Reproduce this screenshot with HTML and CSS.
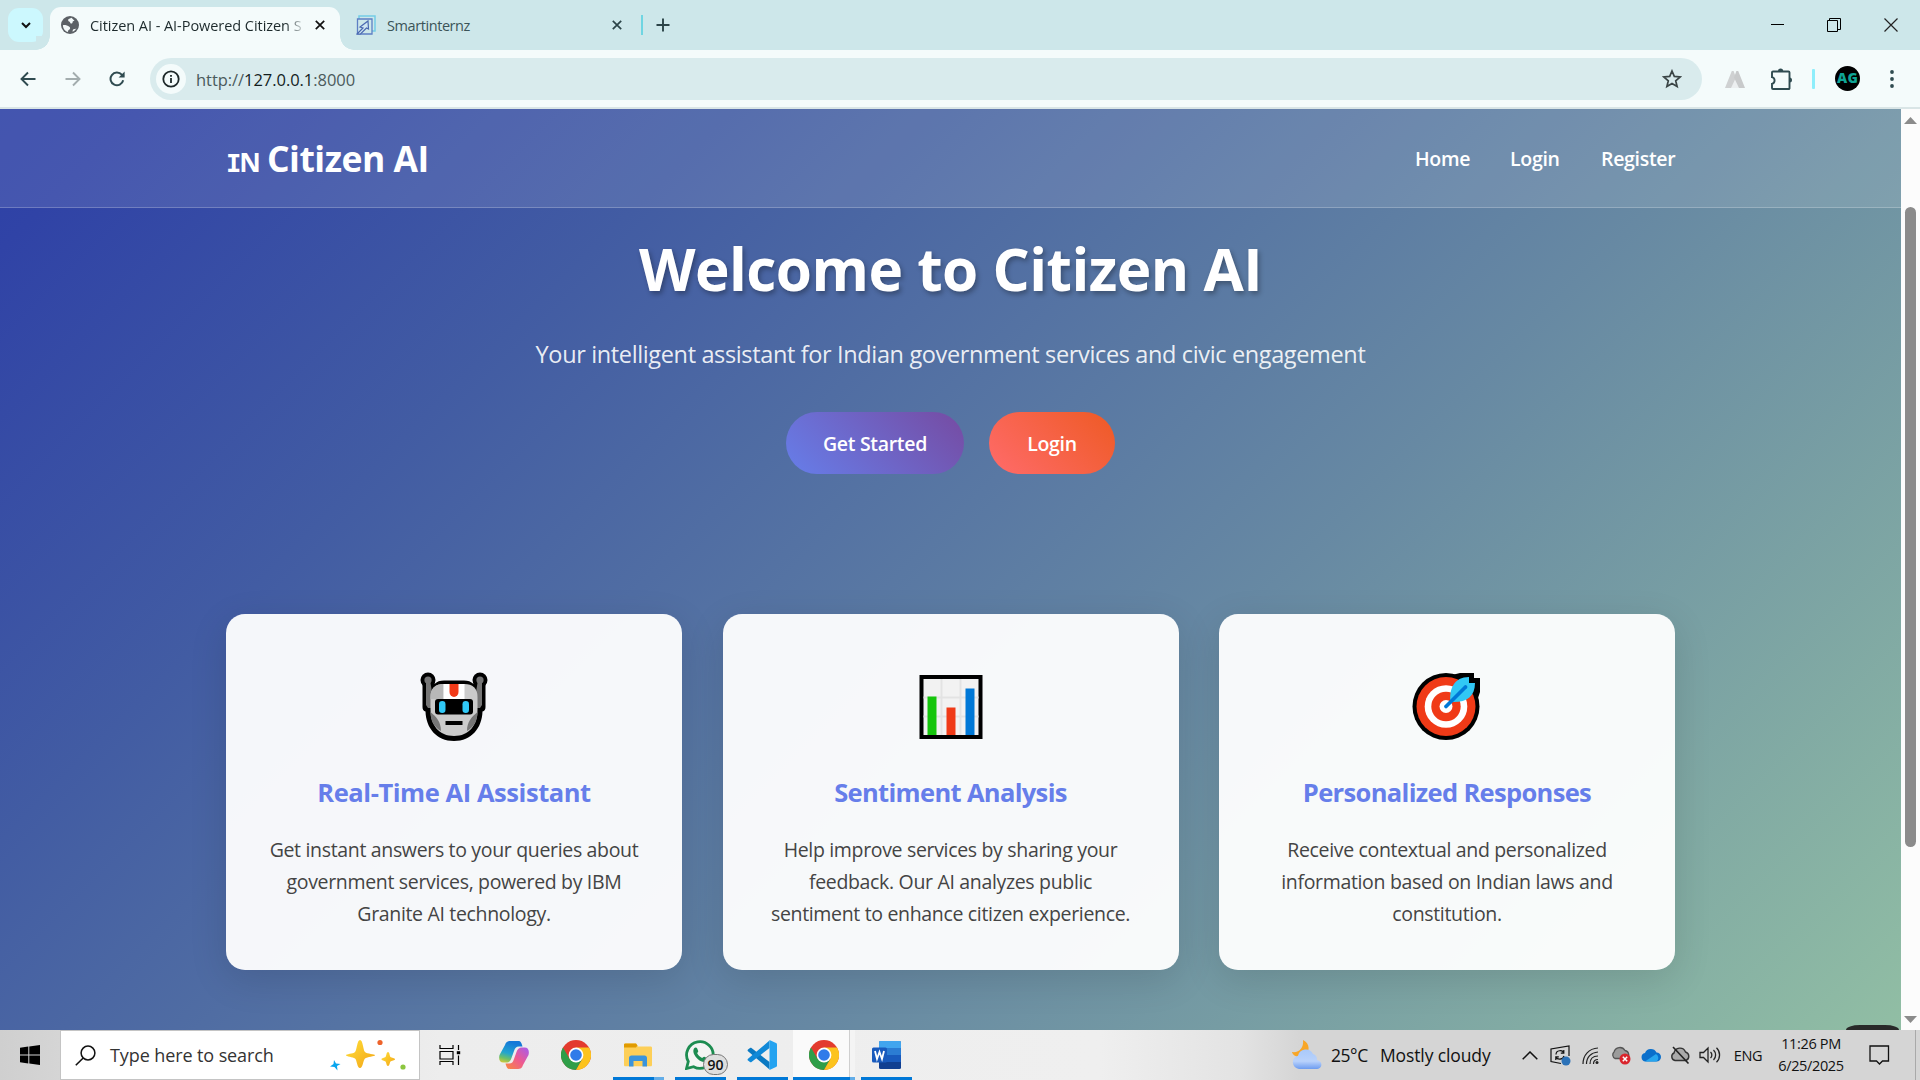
FILE: index.html
```html
<!DOCTYPE html>
<html lang="en">
<head>
<meta charset="utf-8">
<title>Citizen AI - AI-Powered Citizen Services</title>
<link rel="stylesheet" href="styles.css">
</head>
<body>
<svg class="defs" width="0" height="0" aria-hidden="true">
  <defs>
    <linearGradient id="gold" x1="0" y1="0" x2="1" y2="1"><stop offset="0" stop-color="#ffe03a"/><stop offset="1" stop-color="#f3a416"/></linearGradient>
    <linearGradient id="cop-a" x1=".3" y1="0" x2="0" y2="1"><stop offset="0" stop-color="#1478d8"/><stop offset=".5" stop-color="#22a5d0"/><stop offset=".75" stop-color="#6cc06a"/><stop offset="1" stop-color="#e8cb2c"/></linearGradient>
    <linearGradient id="cop-b" x1="1" y1="0" x2="0" y2="1"><stop offset="0" stop-color="#a45cf0"/><stop offset=".5" stop-color="#ee5a90"/><stop offset="1" stop-color="#f98a3c"/></linearGradient>
    <linearGradient id="cloud" x1="0" y1="0" x2="0" y2="1"><stop offset="0" stop-color="#a9c9fa"/><stop offset=".6" stop-color="#b9d2fb"/><stop offset="1" stop-color="#6d9cf0"/></linearGradient>
    <symbol id="chrome" viewBox="0 0 30 30">
      <circle cx="15" cy="15" r="15" fill="#e33b2e"/>
      <path d="M2 7.5A15 15 0 0 0 15 30L21.5 18.7L8.5 18.7Z" fill="#2f9e48"/>
      <path d="M15 30A15 15 0 0 0 28 7.5H15L21.5 18.7Z" fill="#fcc31e"/>
      <circle cx="15" cy="15" r="7.4" fill="#fff"/><circle cx="15" cy="15" r="5.8" fill="#2f7be9"/>
    </symbol>
    <symbol id="cross" viewBox="0 0 10 10"><path d="M.8.8 9.2 9.2M9.2.8.8 9.2" stroke="currentColor" stroke-width="1.7"/></symbol>
  </defs>
</svg>

<div class="tabstrip">
  <button class="tab-search"><svg width="10" height="7" viewBox="0 0 10 7"><path d="M1 1l4 4 4-4" fill="none" stroke="#111" stroke-width="2"/></svg></button>
  <div class="tab tab-active">
    <svg class="favicon" width="18" height="18" viewBox="0 0 18 18"><circle cx="9" cy="9" r="9" fill="#5c6166"/><path d="M10.5 1.8c-1 .6-3.6.9-3.300 2.700.2 1.200 1.800 1 2 2.200.2 1.300 2.300 1.200 2.300-.2 0-1 .8-1.700 2-1.700M1.900 9.200c1.800-.3 4.600 0 6.400 1.600 1.700 1.500.4 2.700-.6 3.300-.8.500-.7 1.400-.6 2C4.200 15.400 2 12.600 1.900 9.200zM11.600 15.800c.1-1.700.3-2.600 1.700-2.700 1.200-.1 2-.6 2.500-1.600-.7 1.900-2.200 3.600-4.200 4.300z" fill="#f4fafa"/></svg>
    <span class="tab-title fade">Citizen AI - AI-Powered Citizen S</span>
    <svg class="tab-close" width="10" height="10"><use href="#cross"/></svg>
  </div>
  <div class="tab tab-idle">
    <svg class="favicon" width="20" height="20" viewBox="0 0 20 20" fill="none"><path d="M3 4V1h16v15h-3" stroke="#74cde6" stroke-width="1.500"/><path d="M1.500 4h14.500v15H1.500z" stroke="#5d7fc4" stroke-width="1.300"/><path d="M1 19l6-6-3-1 8-6 .5 8-2-1-6 6z" stroke="#4a68b0" stroke-width="1.200" fill="#cfe6f2"/></svg>
    <span class="tab-title">Smartinternz</span>
    <svg class="tab-close" width="10" height="10"><use href="#cross"/></svg>
  </div>
  <i class="tab-rule"></i>
  <svg class="newtab" width="14" height="14" viewBox="0 0 14 14"><path d="M7 .5v13M.5 7h13" stroke="#2b4448" stroke-width="1.900"/></svg>
  <div class="winbtns">
    <svg width="14" height="14" viewBox="0 0 14 14"><path d="M0 6.500h13" stroke="#000"/></svg>
    <svg width="14" height="14" viewBox="0 0 14 14" fill="none" stroke="#000"><path d="M.5 2.500h10v11H.5zM2.500 2.500v-2h11v11h-3"/></svg>
    <svg width="14" height="14" viewBox="0 0 14 14"><path d="M.5.5l13 13M13.500.5l-13 13" stroke="#222" stroke-width="1.200"/></svg>
  </div>
</div>

<div class="toolbar">
  <svg class="tool back" width="16" height="16" viewBox="0 0 16 16"><path d="M15.500 8H1.500M8 1.500 1.500 8 8 14.500" fill="none" stroke="#2f4b50" stroke-width="1.900"/></svg>
  <svg class="tool fwd" width="16" height="16" viewBox="0 0 16 16"><path d="M.5 8h14M8 1.500 14.500 8 8 14.500" fill="none" stroke="#a3adae" stroke-width="1.900"/></svg>
  <svg class="tool reload" width="16" height="16" viewBox="0 0 16 16"><path d="M14.200 9.300A6.400 6.400 0 1 1 12.800 3.700L14.500 5.400" fill="none" stroke="#2f4b50" stroke-width="2"/><path d="M15.600.6v6h-6z" fill="#2f4b50"/></svg>
  <div class="omnibox">
    <span class="info"><svg width="18" height="18" viewBox="0 0 18 18"><circle cx="9" cy="9" r="7.700" fill="none" stroke="#1d2829" stroke-width="1.800"/><path d="M9 8v5M9 5v1.800" stroke="#1d2829" stroke-width="1.800"/></svg></span>
    <span class="url">http://<b>127.0.0.1</b>:8000</span>
    <svg class="star" width="20" height="20" viewBox="0 0 20 20"><path d="M10 2l2.300 5.400 5.900.5-4.500 3.900 1.400 5.700L10 14.400l-5.100 3.100 1.400-5.700L1.800 7.900l5.900-.5z" fill="none" stroke="#3b4546" stroke-width="1.700"/></svg>
  </div>
  <svg class="ext" width="20" height="18" viewBox="0 0 20 18"><path d="M10 6 5 18h10z" fill="#eceff0"/><path d="M0 18 6.800 1h1.800L11 7.500 6 18z" fill="#cfd1d2"/><path d="M20 18 13.200 1h-1.800L9 7.500 14 18z" fill="#c8cacb"/></svg>
  <svg class="puzzle" width="21" height="22" viewBox="0 0 21 22"><path d="M2 3.500h15.500a1 1 0 0 1 1 1V20a.8.800 0 0 1-1 1H2a1 1 0 0 1-1-1v-4.200a3.400 3.400 0 0 0 0-6.600V4.500a1 1 0 0 1 1-1z" fill="none" stroke="#2f4b50" stroke-width="1.900"/><path d="M7 3a2.600 2.600 0 0 1 5.200 0zM18.500 9.500a2.500 2.500 0 0 1 0 5z" fill="#2f4b50"/></svg>
  <i class="tool-rule"></i>
  <span class="avatar">AG</span>
  <svg class="dots" width="4" height="18" viewBox="0 0 4 18" fill="#2f4b50"><circle cx="2" cy="2" r="1.900"/><circle cx="2" cy="9" r="1.900"/><circle cx="2" cy="16" r="1.900"/></svg>
</div>

<div class="viewport">
  <div class="page">
    <header class="site-header">
      <div class="wrap header-row">
        <div class="logo"><span class="flag"><span class="flag-i">I</span>N</span><span>Citizen AI</span></div>
        <nav class="nav"><a class="nav-home">Home</a><a class="nav-login">Login</a><a class="nav-reg">Register</a></nav>
      </div>
    </header>
    <section class="hero">
      <h1>Welcome to Citizen AI</h1>
      <p>Your intelligent assistant for Indian government services and civic engagement</p>
      <div class="cta"><a class="btn btn-start">Get Started</a><a class="btn btn-login">Login</a></div>
    </section>
    <section class="wrap cards">
      <article class="card">
        <svg class="emoji" width="70" height="70" viewBox="0 0 70 70">
          <circle cx="9" cy="8" r="7.500"/><circle cx="61" cy="8" r="7.500"/>
          <path d="M3.500 8h11l1 4C18 9.500 21 8.500 25 8.500h20c4 0 7 1 9.500 3.500l1-4h11v27c0 2.500-1 4-3 4.500C63 56 52.500 69 35 69S7 56 6.500 39.500c-2-.5-3-2-3-4.500z"/>
          <circle cx="9" cy="8" r="3.600" fill="#767676"/><circle cx="61" cy="8" r="3.600" fill="#767676"/>
          <path d="M7 8h4l2 12v16h-4l-2-3zM63 8h-4l-2 12v16h4l2-3z" fill="#767676"/>
          <path d="M11.500 25c0-9 5-13 13-13h21c8 0 13 4 13 13v13c0 15-8.500 26-23.500 26S11.500 53 11.500 38z" fill="#cbcbcb"/>
          <path d="M11.500 25c0-9 5-13 13-13v15h-13z" fill="#b8b8b8"/>
          <path d="M11.500 40c6 5 10.500 10 10.500 19-7-4-10.500-10-10.500-19zM58.500 40c-6 5-10.500 10-10.500 19 7-4 10.500-10 10.500-19z" fill="#767676"/>
          <path d="M24.500 12h21v15h-21z" fill="#fff"/><path d="M30.500 12h9v8a4.500 5 0 0 1-9 0z" fill="#f23a18"/>
          <rect x="16" y="27" width="38" height="15.500" rx="3"/><rect x="20" y="29" width="6.500" height="12" rx="3.200" fill="#30c9f7"/><rect x="43.500" y="29" width="6.500" height="12" rx="3.200" fill="#30c9f7"/>
          <path d="M26.500 49h17v4h-17z"/>
        </svg>
        <h3 class="t1">Real-Time AI Assistant</h3>
        <p>Get instant answers to your queries about<br>government services, powered by IBM<br>Granite AI technology.</p>
      </article>
      <article class="card">
        <svg class="emoji" width="70" height="70" viewBox="0 0 70 70">
          <path d="M3.500 3h63v64h-63z"/><path d="M7.500 7h55v56h-55z" fill="#f2f2f2"/>
          <path d="M25.500 7v56M44.500 7v56M7.500 25.500h55M7.500 44.500h55" stroke="#e3e3e3" stroke-width="2"/>
          <path d="M11.500 24.500h9V63h-9z" fill="#16c60c"/><path d="M30.500 35.500h9V63h-9z" fill="#f03a17"/><path d="M49.500 16.500h9V63h-9z" fill="#0078d7"/>
        </svg>
        <h3 class="t2">Sentiment Analysis</h3>
        <p>Help improve services by sharing your<br>feedback. Our AI analyzes public<br>sentiment to enhance citizen experience.</p>
      </article>
      <article class="card">
        <svg class="emoji" width="70" height="70" viewBox="0 0 70 70">
          <circle cx="34" cy="34.500" r="33.500"/><path d="M40 3l8-2h14v5h6v14l-4 12z"/>
          <circle cx="34" cy="34.500" r="29.500" fill="#f03a17"/><circle cx="34" cy="34.500" r="21.300" fill="#fff"/><circle cx="34" cy="34.500" r="14.700" fill="#f03a17"/><circle cx="34" cy="34.500" r="6.500" fill="#fff"/>
          <path d="M38.500 30C37 17 42 5 57 5v6h6c0 14-9 20-24.500 19z" fill="#31c8f5"/><path d="M34 34.500 53.500 15" stroke="#0078d7" stroke-width="3.800" stroke-linecap="round"/>
        </svg>
        <h3 class="t3">Personalized Responses</h3>
        <p>Receive contextual and personalized<br>information based on Indian laws and<br>constitution.</p>
      </article>
    </section>
    <i class="peek"></i>
  </div>
  <div class="scrollbar">
    <svg width="13" height="7" viewBox="0 0 13 7"><path d="M0 7 6.500 0 13 7z" fill="#8b8b8b"/></svg>
    <i class="thumb"></i>
    <svg class="down" width="13" height="7" viewBox="0 0 13 7"><path d="M0 0 6.500 7 13 0z" fill="#8b8b8b"/></svg>
  </div>
</div>

<footer class="taskbar">
  <div class="start"><svg width="20" height="20" viewBox="0 0 20 20"><path d="M0 2.800 8.300 1.600v7.900H0zM9.300 1.500 20 0v9.500H9.300zM0 10.500h8.300v7.900L0 17.200zM9.300 10.500H20V20L9.300 18.500z"/></svg></div>
  <div class="search">
    <svg width="21" height="21" viewBox="0 0 21 21"><circle cx="13" cy="8" r="6.900" fill="none" stroke="#111" stroke-width="1.500"/><path d="M8.200 13 .8 20.300" stroke="#111" stroke-width="1.600"/></svg>
    <span>Type here to search</span>
    <svg class="sparkle" width="76" height="32" viewBox="0 0 76 32"><path d="M30 1c3 0 3 10 5 12s10 2 10 3.200-8 1.500-10 3.300-2 9.500-5 9.500-3-8-5-9.500-9-2-9-3.300 7-1.200 9-3.200S27 1 30 1z" fill="url(#gold)"/><path d="M58 13c1.700 0 1.500 4 2.500 5s4.500 1 4.500 2.200-3.500 1.200-4.500 2.300-.8 4.500-2.500 4.500-1.500-3.500-2.500-4.500-4-1-4-2.300 3-1.200 4-2.200.8-5 2.500-5z" fill="url(#gold)"/><path d="M4 21l2 3.500 4.500.5-3.500 2 .5 4.500L4.500 28 0 27.500 3.500 25z" fill="#07a5ee"/><circle cx="50" cy="3.500" r="2.600" fill="#ee632b"/><circle cx="73" cy="28" r="2.600" fill="#8cc63f"/></svg>
  </div>
  <div class="taskview"><svg width="22" height="20" viewBox="0 0 22 20" fill="none" stroke="#000" stroke-width="1.200"><path d="M1 0v3.500h13V0M1 6.500h13v7.500H1zM1 20v-3.500h13V20M19.500 0v5M19.500 10.500V20"/><path d="M17.800 6.200h3.400v3H17.800z" fill="#000" stroke="none"/></svg></div>
  <div class="apps">
    <div class="app"><svg width="30" height="28" viewBox="0 0 30 28"><path d="M6 4C7 1 8.500 0 11 0h8c3 0 3.500 2 4.500 5.500H20c-3 0-4 1.500-5 4.500l-2.500 7c-1 3-2.500 4.500-5.500 4.500H4.500C.5 21.500-.5 18 .5 14z" fill="url(#cop-a)"/><path d="M24 24c-1 3-2.500 4-5 4h-8c-3 0-3.500-2-4.500-5.500H10c3 0 4-1.500 5-4.500l2.500-7c1-3 2.500-4.500 5.500-4.500h2.500c4 0 5 3.500 4 7.500z" fill="url(#cop-b)"/></svg></div>
    <div class="app"><svg width="30" height="30"><use href="#chrome"/></svg></div>
    <div class="app open split"><svg width="28" height="24" viewBox="0 0 28 24"><path d="M0 2C0 1 .5.500 1.500.500H12L14 3.500H26.500c1 0 1.500.5 1.500 1.500V22c0 .8-.5 1.300-1.500 1.300h-25C.5 23.300 0 22.800 0 22z" fill="#fdcf58"/><path d="M0 1.500Q0 .5 1.500.500H12l1.500 2L12 4.500H0z" fill="#e19b00"/><path d="M5 23.500V15c0-1.500 1-2.500 2.500-2.500h13c1.500 0 2.500 1 2.500 2.500v8.500h-4.500V18h-9v5.500z" fill="#3a94dc"/></svg></div>
    <div class="app open"><svg width="30" height="30" viewBox="0 0 30 30"><path d="M1.500 28.500 3.300 21.500A13.300 13.300 0 1 1 8.600 26.700z" fill="#f3f5f3" stroke="#1c8c50" stroke-width="2.800"/><path d="M9 8.500c1-1.500 2.700-1.200 3.200 0l1 2.500c.3 1-1 1.700-1 2.200 1 2.200 2.700 3.700 4.900 4.700.6 0 1.400-1.500 2.200-1.200l2.700 1.400c.9.6.3 2.500-.9 3.300-2.200 1.400-5.200.3-8.100-2.200C9.600 16.200 7.100 11.700 9 8.500z" fill="#1c8c50"/></svg><span class="badge">90</span></div>
    <div class="app open"><svg width="30" height="30" viewBox="0 0 30 30"><path d="M1 9.500 3 8c.5-.3 1-.3 1.500 0L22.500 22v7.500L1 11.200c-.6-.5-.6-1.200 0-1.700z" fill="#0a79c2"/><path d="M1 20.500 3 22c.5.300 1 .3 1.500 0L22.500 8V.500L1 18.800c-.6.500-.6 1.200 0 1.700z" fill="#1089d8"/><path d="M22.500 0 29 3c.6.300 1 .8 1 1.500v21c0 .7-.4 1.200-1 1.500l-6.500 3z" fill="#25a3f0"/></svg></div>
    <div class="app open current"><svg width="30" height="30"><use href="#chrome"/></svg></div>
    <div class="app open"><svg width="29" height="28" viewBox="0 0 29 28"><rect x="7" width="22" height="28" rx="1.500" fill="#103f91"/><path d="M7 14h22v7H7z" fill="#185abd"/><path d="M7 7h22v7H7z" fill="#2b7cd3"/><path d="M8.500 0h19c1 0 1.500.5 1.500 1.500V7H7V1.500C7 .5 7.500 0 8.500 0z" fill="#41a5ee"/><rect y="6.500" width="15" height="15" rx="1.500" fill="#185abd"/><path d="M3 10l2 8 2.500-7L10 18l2-8" fill="none" stroke="#fff" stroke-width="1.800"/></svg></div>
  </div>
  <div class="weather">
    <svg width="30" height="30" viewBox="0 0 30 30"><path d="M11 0c7 3 8 13 0 16-5 2-10 0-11-4 7 1 12-4 11-12z" fill="#f8a627"/><path d="M7 29a6.700 6.700 0 0 1-1-13.200A8 8 0 0 1 21 14a6 6 0 0 1 4 6c6 1 6 9-1 9z" fill="url(#cloud)"/></svg>
    <span class="temp">25°C</span><span class="cond">Mostly cloudy</span>
  </div>
  <div class="tray">
    <div class="ti w30"><svg width="16" height="9" viewBox="0 0 16 9"><path d="M.7 8.300 8 1l7.300 7.300" fill="none" stroke="#111" stroke-width="1.500"/></svg></div>
    <div class="ti w30"><svg width="21" height="21" viewBox="0 0 21 21" fill="none" stroke="#111" stroke-width="1.200"><path d="M11 18.500 1 16.500V4L19 1v10"/><path d="M6 9.500C6 5 13 4.500 13.500 8M13.800 5v3.200h-3M14 11c-1 4-7 4-8 1M5.800 15v-3.200h3"/><circle cx="16" cy="16" r="4.500" fill="#2c72b8" stroke="none"/></svg></div>
    <div class="ti w30"><svg width="17" height="17" viewBox="0 0 17 17" fill="none" stroke="#222" stroke-width="1.200"><path d="M1 17C1 8 7 1.500 16 1M4.500 17C4.500 10 9 5.500 16 5M8 17c0-5 3-8 8-8M11.500 17c0-3 1.500-4.500 4.500-4.500"/><circle cx="15" cy="15.500" r="1.500" fill="#222" stroke="none"/></svg></div>
    <div class="ti w31"><svg width="21" height="19" viewBox="0 0 21 19"><path d="M5 12.500A4 4 0 0 1 4 6a6 6 0 0 1 11-1.500A4.500 4.500 0 0 1 17 12.500z" fill="#9b9b9b" stroke="#555" stroke-width="1.300"/><circle cx="15" cy="13" r="5.500" fill="#d9252d"/><path d="M12.800 10.800l4.400 4.400M17.200 10.800l-4.400 4.400" stroke="#fff" stroke-width="1.500"/></svg></div>
    <div class="ti w29"><svg width="20" height="14" viewBox="0 0 20 14"><path d="M4.500 13.500A4.300 4.300 0 0 1 4 5 6.300 6.300 0 0 1 15.500 4.500a4.500 4.500 0 0 1 0 9z" fill="#0a6fcb"/><path d="M4 13.500 15 6a4.500 4.500 0 0 1 .5 7.500z" fill="#27a6ee"/></svg></div>
    <div class="ti w30"><svg width="21" height="18" viewBox="0 0 21 18"><path d="M5 14.500A4 4 0 0 1 4 7a6 6 0 0 1 11.500-1A4.500 4.500 0 0 1 16 14.500z" fill="#aaa" stroke="#333" stroke-width="1.400"/><path d="M3 1l15.500 16.500" stroke="#222" stroke-width="1.600"/></svg></div>
    <div class="ti w30"><svg width="22" height="18" viewBox="0 0 22 18" fill="none" stroke="#222" stroke-width="1.300"><path d="M1 6.500h3.500L9 2v14l-4.500-4.500H1zM11.500 6a4 4 0 0 1 0 6M14.500 4a7 7 0 0 1 0 10M17.500 1.800a10 10 0 0 1 0 14.400"/></svg></div>
    <div class="ti lang">ENG</div>
    <div class="ti clock"><span class="time">11:26 PM</span><span class="date">6/25/2025</span></div>
    <div class="ti note"><svg width="21" height="20" viewBox="0 0 21 20"><path d="M1 1h18.500v15H13.500L10.500 19l-3-3H1z" fill="none" stroke="#111" stroke-width="1.300"/></svg></div>
    <i class="peek-rule"></i>
  </div>
</footer>
</body>
</html>
```
FILE: styles.css
```css
* { box-sizing: border-box; }
body { margin: 0; width: 1920px; height: 1080px; overflow: hidden; display: flex; flex-direction: column; font-family: "Open Sans", "Noto Sans", sans-serif; }
svg { display: block; flex: none; }
.defs { position: absolute; }

/* Tab strip */
.tabstrip { height: 50px; flex: none; background: #cde7ea; display: flex; align-items: center; padding-left: 8px; }
.tab-search { width: 35px; height: 34px; border: 0; border-radius: 11px; background: #ccf8fe; display: grid; place-items: center; padding: 0; margin-right: 7px; flex: none; }
.tab { display: flex; align-items: center; font-size: 14.5px; flex: none; }
.tab-active { width: 290px; height: 43px; align-self: flex-end; background: #f4fbfb; border-radius: 11px 11px 0 0; padding: 0 15px 7px 11px; color: #1d2a2c; position: relative; }
.tab-active::before, .tab-active::after { content: ""; position: absolute; bottom: 0; width: 14px; height: 14px; }
.tab-active::before { left: -14px; background: radial-gradient(circle at 0 0, #cde7ea 13.5px, #f4fbfb 14px); }
.tab-active::after { right: -14px; background: radial-gradient(circle at 100% 0, #cde7ea 13.5px, #f4fbfb 14px); }
.tab-title { margin-left: 11px; flex: 1; white-space: nowrap; letter-spacing: -.42px; }
.fade { letter-spacing: -.05px; -webkit-mask-image: linear-gradient(90deg, #000 196px, transparent 216px); mask-image: linear-gradient(90deg, #000 196px, transparent 216px); }
.tab-active .tab-close { color: #111; }
.tab-idle { width: 301px; padding: 0 19px 0 16px; color: #3b5458; }
.tab-idle .tab-close { color: #2b4448; }
.tab-rule { width: 2px; height: 20px; background: #6fd5e2; }
.newtab { margin-left: 13px; }
.winbtns { margin-left: auto; display: flex; gap: 43px; padding: 0 22px 1px 0; }
.winbtns svg:first-child { margin-right: -1px; }

/* Toolbar */
.toolbar { height: 59px; flex: none; background: #f4fbfb; border-bottom: 2px solid #d9e5e6; display: flex; align-items: center; padding-left: 20px; }
.fwd { margin-left: 29px; }
.reload { margin-left: 28px; }
.omnibox { margin-left: 25px; width: 1552px; height: 42px; margin-top: 1px; border-radius: 21px; background: #d9ebed; display: flex; align-items: center; padding: 0 20px 0 6px; }
.info { width: 30px; height: 30px; border-radius: 50%; background: #f4fbfb; display: grid; place-items: center; }
.url { margin-left: 10px; flex: 1; font-size: 16.5px; letter-spacing: -.05px; color: #4b5a5c; }
.url b { font-weight: 400; color: #141d1e; }
.ext { margin-left: 23px; }
.puzzle { margin-left: 26px; }
.tool-rule { width: 3px; height: 20px; margin-left: 20px; background: #8eeefb; border-radius: 1px; }
.avatar { width: 25px; height: 25px; margin-left: 20px; border-radius: 50%; background: #000; color: #0fa595; font-size: 14px; font-weight: 800; line-height: 24px; text-align: center; letter-spacing: .3px; }
.dots { margin-left: 30px; }

/* Page */
.viewport { height: 921px; flex: none; display: flex; overflow: hidden; }
.page { width: 1901px; position: relative; background: linear-gradient(135deg, #2c40a6 0%, #3043a6 5%, #425ca3 26%, #6789a3 62%, #91bea4 100%); }
.wrap { width: 1449px; margin: 0 0 0 226px; }
.site-header { height: 99px; background: rgba(255,255,255,.11); border-bottom: 1px solid rgba(255,255,255,.22); color: #fff; }
.header-row { display: flex; align-items: center; justify-content: space-between; height: 98px; }
.logo { display: flex; align-items: baseline; font-size: 35.5px; font-weight: 700; letter-spacing: -.5px; }
.flag { font-size: 26.5px; letter-spacing: -.5px; width: 41px; }
.flag-i { font-family: "DejaVu Sans Mono", monospace; font-size: 25.5px; letter-spacing: -2px; }
.nav { display: flex; gap: 40px; font-size: 19.5px; font-weight: 600; letter-spacing: -.3px; white-space: nowrap; }
.nav-home { width: 55px; } .nav-login { width: 51px; } .nav-reg { width: 74px; }
.hero { height: 406px; text-align: center; color: #fff; padding-top: 20px; }
h1 { margin: 0; font-size: 58.5px; line-height: 80px; font-weight: 700; letter-spacing: -.52px; text-shadow: 2px 3px 5px rgba(0,0,0,.3); }
.hero p { margin: 27px 0 39px; font-size: 23.5px; line-height: 38px; letter-spacing: -.36px; color: rgba(255,255,255,.9); }
.cta { display: flex; justify-content: center; gap: 25px; }
.btn { height: 62px; border-radius: 31px; font-size: 19.5px; font-weight: 600; line-height: 63px; letter-spacing: -.3px; }
.btn-start { width: 178px; background: linear-gradient(45deg, #667eea, #764ba2); }
.btn-login { width: 126px; background: linear-gradient(45deg, #ff6b6b, #ee5a24); }
.cards { display: grid; grid-template-columns: repeat(3, 456px); justify-content: space-between; }
.card { height: 356px; border-radius: 19px; background: rgba(255,255,255,.95); box-shadow: 0 10px 38px rgba(0,0,0,.12); text-align: center; }
.emoji { margin: 58px auto 0; }
h3 { margin: 31px 0 0; font-size: 25.5px; line-height: 38px; font-weight: 700; color: #667eea; }
.t1 { letter-spacing: -.43px; } .t2 { letter-spacing: -.66px; } .t3 { letter-spacing: -.66px; }
.card p { margin: 23px 0 0; font-size: 19.5px; line-height: 32px; color: #444; letter-spacing: -.33px; white-space: nowrap; }
.peek { position: absolute; left: 1846px; bottom: 0; width: 53px; height: 5px; border-radius: 14px 14px 0 0 / 5px 5px 0 0; background: #292a29; }
.scrollbar { width: 19px; background: #fcfcfc; display: flex; flex-direction: column; align-items: center; padding: 8px 0 7px; }
.thumb { width: 11px; height: 640px; margin-top: 83px; border-radius: 6px; background: #8b8b8b; }
.down { margin-top: auto; }

/* Taskbar */
.taskbar { height: 50px; flex: none; display: flex; background: linear-gradient(90deg, #cfcfcf 0, #d5d5d5 60px, #ededed 440px, #efefef 1100px, #e3e3e3 1240px, #d5d5d5 1300px, #d5d5d5 100%); color: #111; }
.start { width: 60px; display: grid; place-items: center; }
.search { width: 360px; background: #fff; border: 1px solid #c4c4c4; display: flex; align-items: center; padding: 0 13px 0 14px; font-size: 18px; color: #333; letter-spacing: -.1px; }
.search span { margin-left: 14px; white-space: nowrap; }
.sparkle { margin-left: auto; }
.taskview { width: 63px; display: grid; place-items: center; padding-right: 3px; }
.apps { display: flex; }
.app { width: 62px; display: grid; place-items: center; position: relative; }
.open::after { content: ""; position: absolute; left: 6px; bottom: 0; width: 51px; height: 3px; background: #0078d7; }
.split::after { background: linear-gradient(90deg, #0078d7 41px, #63ade8 41px); }
.current { background: linear-gradient(90deg, #fafafa 56px, #cfcfcf 56px, #cfcfcf 57px, #f4f4f4 57px); }
.current::after { left: 0; width: 62px; background: linear-gradient(90deg, #0078d7 57px, #63ade8 57px); }
.badge { position: absolute; left: 34px; top: 24px; width: 25px; height: 21px; border: 1px solid #777; border-radius: 11px; background: #dedede; font-size: 14px; font-weight: 600; line-height: 19px; text-align: center; }
.weather { margin-left: auto; width: 225px; display: flex; align-items: center; padding-left: 2px; font-size: 17.5px; white-space: nowrap; letter-spacing: -.45px; }
.temp { width: 48px; margin-left: 9px; }
.cond { letter-spacing: -.12px; margin-left: 1px; }
.tray { display: flex; width: 405px; }
.ti { display: grid; place-items: center; }
.w29 { width: 29px; } .w30 { width: 30px; } .w31 { width: 31px; }
.lang { width: 46px; font-size: 14.5px; letter-spacing: -.4px; }
.clock { width: 80px; margin-right: 2px; font-size: 14.5px; align-content: center; line-height: 22px; letter-spacing: -.35px; white-space: nowrap; }
.note { width: 52px; }
.peek-rule { width: 1px; background: #a9a9a9; margin-left: 10px; }
```
